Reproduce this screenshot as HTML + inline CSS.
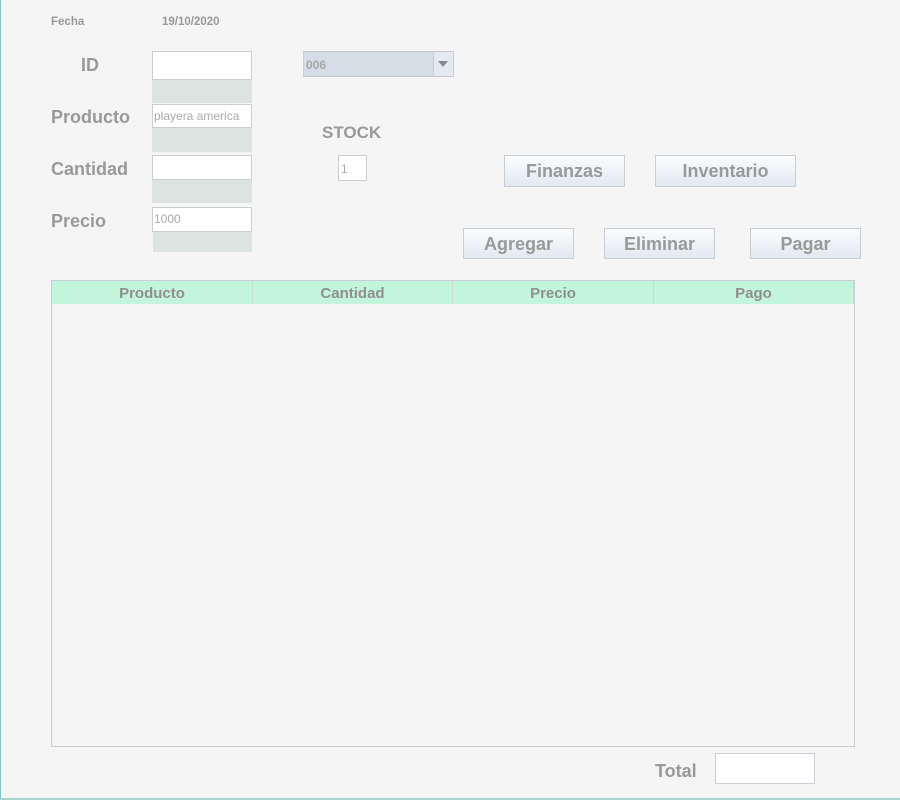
<!DOCTYPE html>
<html><head><style>
body{margin:0;width:900px;height:800px;background:#f5f5f5;position:relative;overflow:hidden;font-family:"Liberation Sans",sans-serif;font-weight:bold;color:#999}
div{position:absolute;box-sizing:border-box}
.l{font-size:18px;color:#999}
.in{background:#fff;border:1px solid #c8ced3;font-weight:normal;font-size:12px;color:#aaa;padding:4px 1px;}
.g{background:#dde3e1}
.b{border:1px solid #c5ccd3;background:linear-gradient(#fbfcfd,#e3e9f0);font-size:18px;color:#999;text-align:center;line-height:31px}
.h{top:281px;height:23px;background:#c2f5dc;border-right:1px solid #d0d8d4;text-align:center;font-size:15px;line-height:25px;color:#8f8f8f}
</style></head><body>
<div style="left:0;top:0;width:1px;height:800px;background:#7fc6c6"></div>
<div style="left:0;top:798px;width:900px;height:2px;background:#a9d4d0"></div>
<div style="left:51px;top:16px;font-size:11.5px">Fecha</div>
<div style="left:162px;top:16px;font-size:11.5px">19/10/2020</div>
<div class="l" style="left:81px;top:55px">ID</div>
<div class="l" style="left:51px;top:107px">Producto</div>
<div class="l" style="left:51px;top:159px">Cantidad</div>
<div class="l" style="left:51px;top:211px">Precio</div>
<div class="in" style="left:152px;top:51px;width:100px;height:29px"></div>
<div class="g" style="left:152px;top:80px;width:100px;height:23px"></div>
<div class="in" style="left:152px;top:104px;width:100px;height:24px">playera america</div>
<div class="g" style="left:152px;top:128px;width:100px;height:24px"></div>
<div class="in" style="left:152px;top:155px;width:100px;height:25px"></div>
<div class="g" style="left:152px;top:180px;width:100px;height:23px"></div>
<div class="in" style="left:152px;top:207px;width:100px;height:25px">1000</div>
<div class="g" style="left:153px;top:232px;width:99px;height:20px"></div>
<div style="left:303px;top:51px;width:151px;height:26px;background:#d5dee6;border:1px solid #c5ccd3;font-size:12px;color:#a5a5a5;padding:6px 2px">006</div>
<div style="left:433px;top:52px;width:20px;height:24px;border-left:1px solid #c5ccd3;background:#e4eaf0"></div>
<div style="left:438px;top:61px;width:0;height:0;border-left:5px solid transparent;border-right:5px solid transparent;border-top:6px solid #888"></div>
<div style="left:322px;top:123px;font-size:17px">STOCK</div>
<div class="in" style="left:338px;top:155px;width:29px;height:26px;padding:6px 2px">1</div>
<div class="b" style="left:504px;top:155px;width:121px;height:32px">Finanzas</div>
<div class="b" style="left:655px;top:155px;width:141px;height:32px">Inventario</div>
<div class="b" style="left:463px;top:228px;width:111px;height:31px">Agregar</div>
<div class="b" style="left:604px;top:228px;width:111px;height:31px">Eliminar</div>
<div class="b" style="left:750px;top:228px;width:111px;height:31px">Pagar</div>
<div style="left:51px;top:280px;width:804px;height:467px;border:1px solid #c8ced3;background:#f5f5f5"></div>
<div class="h" style="left:52px;width:201px">Producto</div>
<div class="h" style="left:253px;width:200px">Cantidad</div>
<div class="h" style="left:453px;width:201px">Precio</div>
<div class="h" style="left:654px;width:200px">Pago</div>
<div class="l" style="left:655px;top:761px">Total</div>
<div class="in" style="left:715px;top:753px;width:100px;height:31px"></div>
</body></html>
